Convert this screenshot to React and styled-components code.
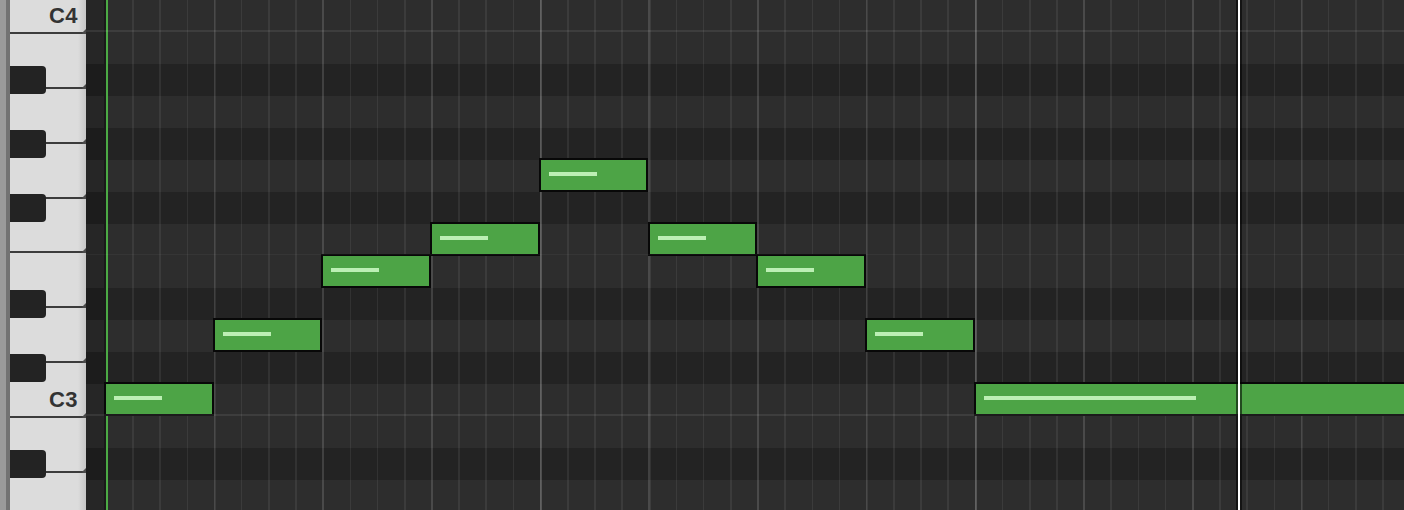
import React from 'react';
import styled, { createGlobalStyle } from 'styled-components';

const ROW = 32;
const BEAT = 108.7;
const STEP = BEAT / 4;
const WHITE_KEY = (ROW * 12) / 7;

// top to bottom, C4 down to A2
const ROWS = [
  { name: 'C4', black: false, line: 'c' },
  { name: 'B3', black: false },
  { name: 'A#3', black: true },
  { name: 'A3', black: false },
  { name: 'G#3', black: true },
  { name: 'G3', black: false },
  { name: 'F#3', black: true },
  { name: 'F3', black: false, line: 'f' },
  { name: 'E3', black: false },
  { name: 'D#3', black: true },
  { name: 'D3', black: false },
  { name: 'C#3', black: true },
  { name: 'C3', black: false, line: 'c' },
  { name: 'B2', black: false },
  { name: 'A#2', black: true },
  { name: 'A2', black: false },
];

const WHITE_KEYS = ['C4', 'B3', 'A3', 'G3', 'F3', 'E3', 'D3', 'C3', 'B2', 'A2'];

const NOTES = [
  { row: 12, beat: 0, length: 1, bar: 48 },
  { row: 10, beat: 1, length: 1, bar: 48 },
  { row: 8, beat: 2, length: 1, bar: 48 },
  { row: 7, beat: 3, length: 1, bar: 48 },
  { row: 5, beat: 4, length: 1, bar: 48 },
  { row: 7, beat: 5, length: 1, bar: 48 },
  { row: 8, beat: 6, length: 1, bar: 48 },
  { row: 10, beat: 7, length: 1, bar: 48 },
  { row: 12, beat: 8, length: 4, bar: 212 },
];

const GlobalStyle = createGlobalStyle`
  html, body {
    margin: 0;
    padding: 0;
    background: #2d2d2d;
    overflow: hidden;
  }
`;

const Screen = styled.div`
  display: flex;
  width: 1404px;
  height: 510px;
  overflow: hidden;
  font-family: "Liberation Sans", Arial, sans-serif;
`;

const EdgeStrip = styled.div`
  width: 10px;
  flex: none;
  background: linear-gradient(to right, #9a9a9a 0 6px, #727272 6px 10px);
`;

const Keyboard = styled.div`
  position: relative;
  width: 76px;
  flex: none;
  overflow: hidden;
  display: flex;
  flex-direction: column;
  background: #dcdcdc;
`;

const WhiteKeys = styled.div`
  display: flex;
  flex-direction: column;
  margin-top: ${34 - WHITE_KEY}px;
`;

const WhiteKey = styled.div`
  position: relative;
  flex: none;
  height: ${WHITE_KEY}px;
  box-sizing: border-box;
  border-bottom: 2px solid #3c3c3c;
  background: linear-gradient(to right, #dcdcdc 0, #dcdcdc 68px, #c6c6c6 76px);
  display: flex;
  align-items: flex-end;
  justify-content: flex-end;
  padding: 0 8px 5px 0;

  &::after {
    content: '';
    position: absolute;
    right: 0;
    bottom: -5px;
    border-top: 4px solid transparent;
    border-bottom: 4px solid transparent;
    border-right: 4px solid #4a4a4a;
  }
`;

const KeyLabel = styled.span`
  font-size: 22px;
  line-height: 1;
  font-weight: 700;
  letter-spacing: 0.5px;
  color: #333333;
`;

const BlackKey = styled.div`
  position: absolute;
  left: 0;
  width: 36px;
  height: 28px;
  background: #232323;
  border-radius: 0 4px 4px 0;
`;

const Roll = styled.div`
  position: relative;
  flex: 1;
  display: flex;
  flex-direction: column;
`;

const Row = styled.div`
  position: relative;
  flex: none;
  height: ${ROW}px;
  display: flex;

  &::after {
    content: '';
    position: absolute;
    left: 0;
    right: 0;
    top: ${ROW - 2}px;
    height: ${p => (p.$line === 'c' ? 2 : 1)}px;
    background: ${p =>
      p.$line === 'c' ? 'rgba(255,255,255,0.08)' : p.$line === 'f' ? 'rgba(255,255,255,0.04)' : 'transparent'};
    z-index: 2;
  }
`;

const Gutter = styled.div`
  width: 18px;
  flex: none;
  background: ${p => (p.$black ? '#1c1c1c' : '#262626')};
`;

const Lane = styled.div`
  flex: 1;
  background: ${p => (p.$black ? '#232323' : '#2d2d2d')};
`;

const Canvas = styled.div`
  position: absolute;
  top: 0;
  bottom: 0;
  left: 18px;
  right: 0;
  z-index: 1;
`;

const GridLines = styled.div`
  position: absolute;
  inset: 0;
  background-image:
    repeating-linear-gradient(to right, rgba(255,255,255,0.13) 0 2px, transparent 2px ${BEAT * 4}px),
    repeating-linear-gradient(to right, rgba(255,255,255,0.075) 0 2px, transparent 2px ${BEAT}px),
    repeating-linear-gradient(to right, rgba(255,255,255,0.065) 0 1.6px, transparent 1.6px ${STEP}px);
  background-position: 1px 0;
`;

const StartLine = styled.div`
  position: absolute;
  top: 0;
  bottom: 0;
  left: 0;
  width: 2px;
  background: #1a1a1a;
  border-right: 2px solid #4caa45;
`;

const Note = styled.div`
  position: absolute;
  height: 34px;
  box-sizing: border-box;
  border: 2px solid #080808;
  background: #4da446;
  z-index: 3;
`;

const Velocity = styled.div`
  position: absolute;
  left: 8px;
  top: 12px;
  height: 4px;
  background: #bcefb4;
`;

const Playhead = styled.div`
  position: absolute;
  top: 0;
  bottom: 0;
  left: 1134px;
  width: 2px;
  background: #ffffff;
  box-shadow: -2px 0 0 rgba(0, 0, 0, 0.55), 2px 0 0 rgba(0, 0, 0, 0.55);
  z-index: 4;
`;

const App = () => {
  return (
    <>
      <GlobalStyle />
      <Screen>
        <EdgeStrip />
        <Keyboard>
          <WhiteKeys>
            {WHITE_KEYS.map(name => (
              <WhiteKey key={name}>{name.startsWith('C') && <KeyLabel>{name}</KeyLabel>}</WhiteKey>
            ))}
          </WhiteKeys>
          {ROWS.map((r, i) => (r.black ? <BlackKey key={r.name} style={{ top: i * ROW + 2 }} /> : null))}
        </Keyboard>
        <Roll>
          {ROWS.map(r => (
            <Row key={r.name} $line={r.line}>
              <Gutter $black={r.black} />
              <Lane $black={r.black} />
            </Row>
          ))}
          <Canvas>
            <GridLines />
            <StartLine />
            {NOTES.map((n, i) => (
              <Note
                key={i}
                style={{ left: n.beat * BEAT, top: n.row * ROW - 2, width: n.length * BEAT + 1 }}
              >
                <Velocity style={{ width: n.bar }} />
              </Note>
            ))}
            <Playhead />
          </Canvas>
        </Roll>
      </Screen>
    </>
  );
};

export default App;
